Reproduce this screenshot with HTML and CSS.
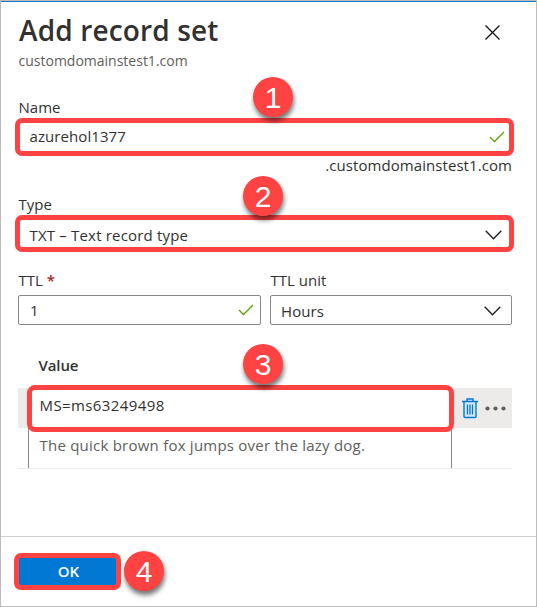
FILE: index.html
```html
<!DOCTYPE html>
<html lang="en">
<head>
<meta charset="utf-8">
<title>Add record set</title>
<link rel="stylesheet" href="styles.css">
</head>
<body>
<main class="panel">
  <header class="header">
    <div>
      <h1 class="title">Add record set</h1>
      <p class="subtitle">customdomainstest1.com</p>
    </div>
    <svg class="close" width="15" height="15" viewBox="0 0 15 15"><path d="M.5.5l14 14M14.500.5l-14 14"/></svg>
  </header>

  <section class="form">
    <div class="label label-name">Name</div>
    <div class="field marked">
      <span class="t-name">azurehol1377</span>
      <svg class="check" width="16" height="12" viewBox="0 0 16 12"><path d="M1 6l4.500 4.500L15 1"/></svg>
      <span class="badge badge-1">1</span>
    </div>
    <div class="suffix">.customdomainstest1.com</div>

    <div class="label label-type">Type</div>
    <div class="field marked marked-type">
      <span class="t-type">TXT – Text record type</span>
      <svg class="chevron" width="17" height="10" viewBox="0 0 17 10"><path d="M.7.7l7.800 8L16.300.7"/></svg>
      <span class="badge badge-2">2</span>
    </div>

    <div class="ttl">
      <div>
        <div class="label">TTL <span class="required">*</span></div>
        <div class="field boxed boxed-value">
          <span>1</span>
          <svg class="check" width="16" height="12" viewBox="0 0 16 12"><path d="M1 6l4.500 4.500L15 1"/></svg>
        </div>
      </div>
      <div>
        <div class="label">TTL unit</div>
        <div class="field boxed boxed-unit">
          <span class="t-hours">Hours</span>
          <svg class="chevron" width="17" height="10" viewBox="0 0 17 10"><path d="M.7.7l7.800 8L16.300.7"/></svg>
        </div>
      </div>
    </div>
  </section>

  <section class="records">
    <div class="records-head">Value</div>
    <div class="record">
      <div class="record-input"><span class="t-ms">MS=ms63249498</span><span class="badge badge-3">3</span></div>
      <svg class="trash" width="16" height="21" viewBox="0 0 16 21"><path class="fill" d="M2 3.500h12v16H2z"/><path d="M0 3.500h16M5 3V1h6v2M2 4v14.500q0 1 1 1h10q1 0 1-1V4"/><path class="bars" d="M5.500 6.500v10M8 6.500v10M10.500 6.500v10"/></svg>
      <svg class="more" width="21" height="5" viewBox="0 0 21 5"><circle cx="2.500" cy="2.500" r="2.100"/><circle cx="10.500" cy="2.500" r="2.100"/><circle cx="18.500" cy="2.500" r="2.100"/></svg>
    </div>
    <div class="record-empty"><div class="placeholder">The quick brown fox jumps over the lazy dog.</div></div>
  </section>

  <footer class="footer">
    <button class="ok">OK</button>
    <span class="badge badge-4">4</span>
  </footer>
</main>
</body>
</html>
```

FILE: styles.css
```css
* { box-sizing: border-box; }
body { margin: 0; background: #fff; }
.panel {
  width: 537px;
  height: 607px;
  display: flex;
  flex-direction: column;
  border: 1px solid #bcbcbc;
  font: 15px/20px "Open Sans", "Noto Sans", sans-serif;
  color: #323130;
  overflow: hidden;
}
.header {
  height: 95px;
  border-top: 1px solid #1875c4;
  padding: 8px 36px 0 18px;
  display: flex;
  justify-content: space-between;
  flex: none;
}
.title { margin: 0; font-size: 28px; line-height: 40px; font-weight: 600; letter-spacing: .15px; white-space: nowrap; }
.subtitle { margin: 1px 0 0 -.5px; font-size: 14px; line-height: 20px; color: #605e5c; }
.close { margin-top: 15px; fill: none; stroke: #111; stroke-width: 1.300; }
.form { padding: 0 22px 0 14px; }
.label { height: 20px; padding-left: 3.500px; white-space: nowrap; }
.label-name { margin-top: 1px; }
.field { display: flex; align-items: center; justify-content: space-between; white-space: nowrap; }
.marked { position: relative; height: 38px; margin-top: 1px; border: 5px solid #ff4343; border-radius: 7px; padding: 0 4px 0 9.500px; }
.marked-type { height: 37px; padding: 0 7px 0 9.500px; }
.t-name { margin-bottom: 2px; letter-spacing: .08px; }
.t-type { margin-top: 2px; letter-spacing: .18px; }
.marked-type .chevron { margin-top: 3px; }
.check { fill: none; stroke: #57a300; stroke-width: 1.300; }
.chevron { fill: none; stroke: #222; stroke-width: 1.400; }
.suffix { height: 20px; line-height: 18px; letter-spacing: .07px; text-align: right; padding-right: 2px; }
.label-type { margin-top: 18px; }
.ttl { display: grid; grid-template-columns: 243px 242px; gap: 9px; padding-left: 3px; margin-top: 18px; }
.ttl .label { padding-left: .5px; }
.required { color: #a4262c; font-weight: 600; }
.boxed { height: 30px; margin-top: 5px; border: 1px solid #8a8886; border-radius: 2px; }
.boxed-value { padding: 0 6px 0 11px; }
.boxed-unit { padding: 0 10px; }
.t-hours { margin-top: 2px; letter-spacing: .1px; }
.boxed-unit .chevron { margin-top: 2px; }
.records { margin: 30px 24px 0 17px; }
.records-head { height: 33px; padding-left: 20.500px; font-weight: 600; letter-spacing: -.1px; }
.record { height: 40px; background: #edebe9; display: flex; align-items: center; padding-left: 9px; }
.record-input { position: relative; width: 427px; height: 47px; flex: none; background: #fff; border: 5px solid #ff4343; border-radius: 8px; padding: 5px 7.500px; }
.t-ms { letter-spacing: .4px; }
.trash { margin-left: 8px; fill: none; stroke: #0078d4; stroke-width: 1.400; }
.trash .fill { fill: #d4e9f8; stroke: none; }
.trash .bars { stroke-width: 1.300; }
.more { margin-left: 7px; fill: #605e5c; }
.record-empty { height: 41px; border-bottom: 1px solid #edebe9; padding-left: 10px; }
.placeholder { width: 424px; height: 40px; border: solid #8a8886; border-width: 0 1px; padding: 7px 0 0 10.500px; color: #605e5c; letter-spacing: .23px; white-space: nowrap; }
.footer { margin-top: auto; height: 70px; flex: none; border-top: 1px solid #d2d0ce; padding: 16px 0 0 13px; display: flex; }
.ok { width: 107px; height: 37px; border: 5px solid #ff4343; border-radius: 7px; padding: 0 0 2px 2px; background: #0078d4; color: #fff; font: 600 15px/20px "Open Sans", sans-serif; }
.badge { width: 40px; height: 40px; border-radius: 50%; background: #ff4343; box-shadow: 1px 4px 5px rgba(0,0,0,.55); color: #fff; font: 30px/41px "Liberation Sans", Arial, sans-serif; text-align: center; }
.badge-1, .badge-2, .badge-3 { position: absolute; z-index: 1; }
.badge-1 { left: 233px; top: -46px; }
.badge-2 { left: 223px; top: -44px; }
.badge-3 { left: 211px; top: -46px; }
.badge-4 { margin: -2px 0 0 3px; }
```
